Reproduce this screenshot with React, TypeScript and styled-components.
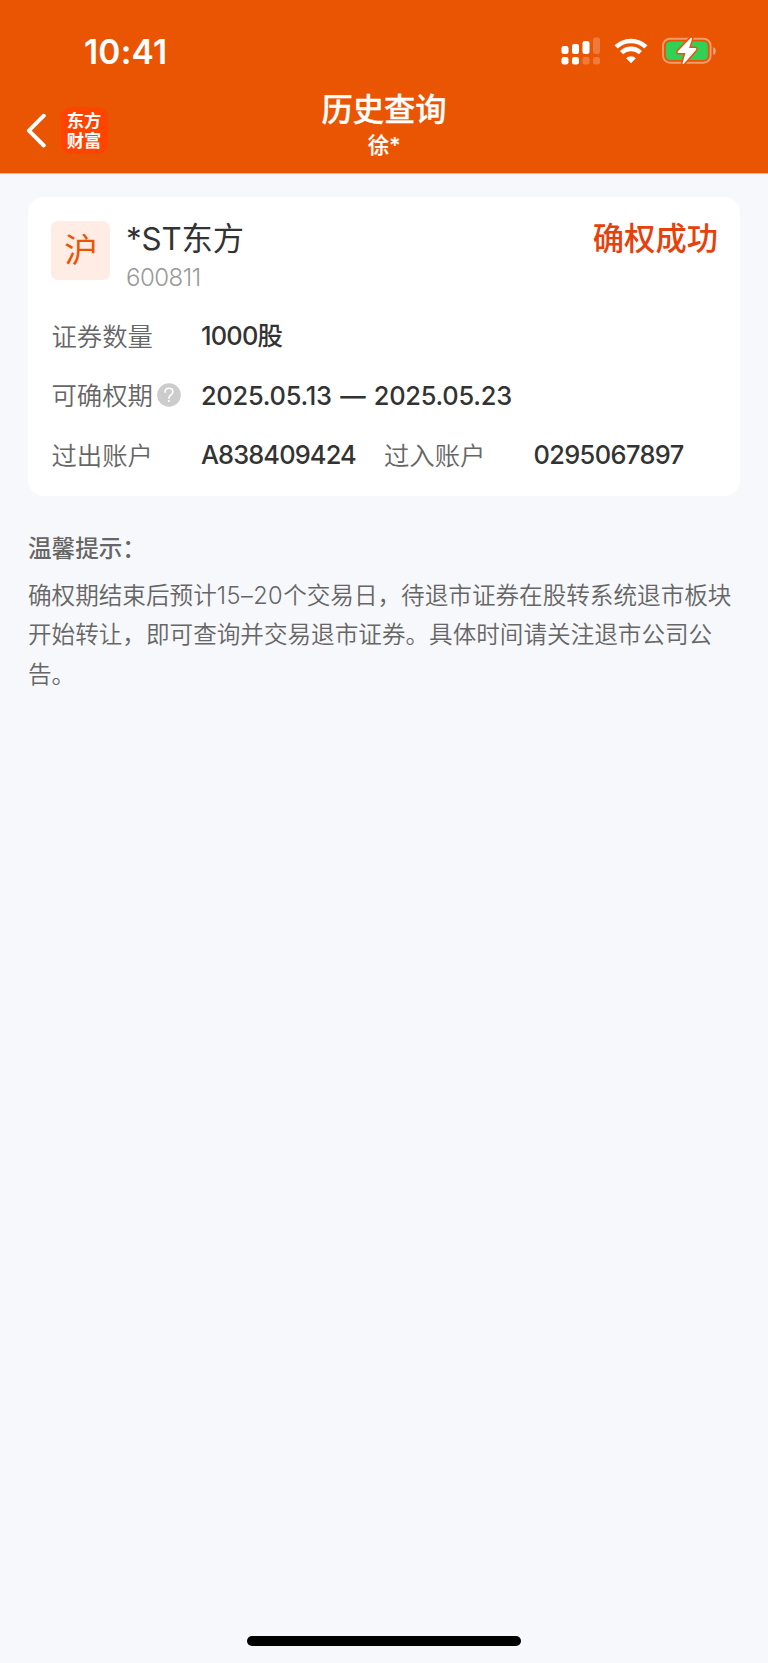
import React from "react";
import styled, { createGlobalStyle } from "styled-components";

const GlobalStyle = createGlobalStyle`
  * { box-sizing: border-box; }
  body {
    margin: 0;
    background: #f7f8fb;
    font-family: Inter, "Noto Sans CJK SC", sans-serif;
  }
`;

const Screen = styled.div`
  display: flex;
  flex-direction: column;
  width: 768px;
  height: 1663px;
  overflow: hidden;
  background: #f7f8fb;
`;

const Header = styled.header`
  flex: none;
  height: 174px;
  background: #ea5504;
  color: #fff;
  border-bottom: 1px solid #f2b294;
`;

const StatusBar = styled.div`
  display: flex;
  justify-content: space-between;
  align-items: center;
  height: 85px;
  padding: 17px 51px 0 84px;
`;

const Clock = styled.time`
  padding-top: 2px;
  font-size: 33.5px;
  font-weight: 600;
  line-height: 40px;
  letter-spacing: 0.2px;
`;

const StatusIcons = styled.div`
  display: flex;
  align-items: center;
  height: 40px;
`;

const NavBar = styled.div`
  display: grid;
  grid-template-columns: 1fr auto 1fr;
  height: 88px;
`;

const NavLeft = styled.div`
  display: flex;
  align-items: flex-start;
  gap: 15px;
  padding: 22px 0 0 26px;
`;

const BrandLogo = styled.div`
  display: flex;
  flex-direction: column;
  align-items: center;
  width: 47px;
  height: 47px;
  padding: 4px 1px 0 0;
  border-radius: 10px;
  background: #ff4300;
  font-size: 17.3px;
  font-weight: 700;
  line-height: 19.5px;
`;

const TitleGroup = styled.div`
  display: flex;
  flex-direction: column;
  align-items: center;
  padding-top: 5px;
`;

const Title = styled.h1`
  margin: 0;
  font-size: 31.3px;
  font-weight: 500;
  line-height: 40px;
  -webkit-text-stroke: 0.3px #fff;
`;

const Subtitle = styled.div`
  font-size: 21.5px;
  font-weight: 500;
  line-height: 31px;
  -webkit-text-stroke: 0.2px #fff;
`;

const Card = styled.section`
  flex: none;
  height: 299px;
  margin: 23px 28px 0;
  padding: 24px 22px 0 23.4px;
  border-radius: 16px;
  background: #fff;
`;

const StockHeader = styled.div`
  display: flex;
  align-items: flex-start;
  height: 82px;
`;

const MarketBadge = styled.div`
  width: 59px;
  height: 59px;
  margin-right: 15.6px;
  border-radius: 7px;
  background: #ffece5;
  color: #ea5504;
  font-size: 33.5px;
  line-height: 59px;
  text-align: center;
`;

const StockInfo = styled.div`
  display: flex;
  flex-direction: column;
  flex: 1;
`;

const StockName = styled.div`
  color: #333;
  font-size: 31.3px;
  line-height: 37px;
  letter-spacing: -0.15px;
`;

const StockCode = styled.div`
  color: #999;
  font-size: 24px;
  font-weight: 350;
  line-height: 40px;
  letter-spacing: -0.5px;
`;

const Status = styled.div`
  color: #e6400c;
  font-size: 31.3px;
  font-weight: 500;
  line-height: 37px;
`;

const Row = styled.div`
  display: flex;
  align-items: center;
  height: 59.6px;
`;

const Label = styled.div`
  display: flex;
  align-items: center;
  gap: 4.5px;
  width: 149.5px;
  padding-top: 4px;
  color: #666;
  font-family: "Noto Sans CJK SC", sans-serif;
  font-size: 25.4px;
  font-weight: 350;
  line-height: 36px;
`;

const Value = styled.div<{ $spacing?: number; $width?: number }>`
  width: ${(p) => (p.$width ? `${p.$width}px` : "auto")};
  padding-top: 7px;
  color: #333;
  font-size: 25.4px;
  font-weight: 500;
  line-height: 36px;
  white-space: pre;
  word-spacing: 1.9px;
  letter-spacing: ${(p) => p.$spacing ?? 0}px;
`;

const Tips = styled.section`
  flex: 1;
  padding: 35px 28px 0;
  color: #666;
`;

const TipsTitle = styled.h2`
  margin: 0 0 9px;
  font-size: 23.6px;
  font-weight: 500;
  line-height: 36px;
`;

const TipsText = styled.p`
  margin: 0;
  font-size: 23.6px;
  font-weight: 350;
  line-height: 39.4px;
  white-space: nowrap;
`;

const Digits = styled.span`
  letter-spacing: 0.45px;
`;

const HomeIndicator = styled.div`
  flex: none;
  align-self: center;
  width: 274px;
  height: 10px;
  margin-bottom: 17px;
  border-radius: 5px;
  background: #000;
`;

const SignalIcon = () => (
  <svg width="40" height="28" viewBox="0 0 40 28" fill="#fff">
    <rect x="0.5" y="9" width="7" height="8" rx="2.2" />
    <rect x="11" y="7" width="7" height="10" rx="2.2" />
    <rect x="21.5" y="4" width="7" height="13" rx="2.2" />
    <rect x="32" y="0.5" width="7" height="16.5" rx="2.2" opacity="0.22" />
    <rect x="0.5" y="20" width="7" height="7.6" rx="2.4" />
    <rect x="11" y="20" width="7" height="7.6" rx="2.4" />
    <rect x="21.5" y="20" width="7" height="7.6" rx="2.4" opacity="0.22" />
    <rect x="32" y="20" width="7" height="7.6" rx="2.4" opacity="0.22" />
  </svg>
);

const WifiIcon = styled.svg`
  margin: 0 14px 0 13px;
`;

const Wifi = () => (
  <WifiIcon width="34" height="26" viewBox="0 0 34 26">
    <g fill="none" stroke="#fff" strokeWidth="4.6">
      <path d="M2.1 8.9A21.6 21.6 0 0 1 31.9 8.9" />
      <path d="M7.6 14.6A13.6 13.6 0 0 1 26.4 14.6" />
    </g>
    <path d="M17 25.2 12.2 20.3A6.8 6.8 0 0 1 21.8 20.3Z" fill="#fff" />
  </WifiIcon>
);

const Battery = () => (
  <svg width="55" height="30" viewBox="0 0 55 30">
    <rect x="1" y="2.7" width="47.6" height="24" rx="7" fill="none" stroke="#fff" strokeOpacity="0.42" strokeWidth="1.9" />
    <rect x="3.8" y="5.5" width="42" height="18.6" rx="4.4" fill="#31d158" />
    <path d="M51.2 11Q53.9 12 53.9 15T51.2 19Z" fill="#fff" fillOpacity="0.45" />
    <path
      d="M28.6 1.9 15.7 15.6Q15.2 16.8 16.4 17H23.5L20.5 27.2Q20.7 28.5 21.9 27.7L34.2 13.7Q34.7 12.4 33.4 12.1H27.1L30 2.9Q29.8 1.5 28.6 1.9Z"
      fill="#fff"
      stroke="#ea5504"
      strokeWidth="3"
      paintOrder="stroke"
      strokeLinejoin="round"
    />
  </svg>
);

const BackIcon = () => (
  <svg width="20" height="47" viewBox="0 0 20 47" fill="none" stroke="#fff" strokeWidth="3.9" strokeLinecap="round" strokeLinejoin="round">
    <path d="M17.8 8.7 2.9 23.7 17.8 38.5" />
  </svg>
);

const HelpGlyph = styled.svg`
  margin-top: 2px;
`;

const HelpIcon = () => (
  <HelpGlyph width="24" height="24" viewBox="0 0 24 24" fill="none">
    <circle cx="12" cy="12" r="11.8" fill="#ccc" />
    <path d="M8 9.3C8 6.8 9.6 5.3 11.9 5.3S15.9 6.7 15.9 8.9C15.9 11.7 11.9 12 11.9 15.2" stroke="#fff" strokeWidth="1.6" strokeLinecap="round" />
    <circle cx="11.9" cy="18" r="1.1" fill="#fff" />
  </HelpGlyph>
);

export default function App() {
  return (
    <Screen>
      <GlobalStyle />
      <Header>
        <StatusBar>
          <Clock>10:41</Clock>
          <StatusIcons>
            <SignalIcon />
            <Wifi />
            <Battery />
          </StatusIcons>
        </StatusBar>
        <NavBar>
          <NavLeft>
            <BackIcon />
            <BrandLogo>
              <span>东方</span>
              <span>财富</span>
            </BrandLogo>
          </NavLeft>
          <TitleGroup>
            <Title>历史查询</Title>
            <Subtitle>徐*</Subtitle>
          </TitleGroup>
        </NavBar>
      </Header>
      <Card>
        <StockHeader>
          <MarketBadge>沪</MarketBadge>
          <StockInfo>
            <StockName>*ST东方</StockName>
            <StockCode>600811</StockCode>
          </StockInfo>
          <Status>确权成功</Status>
        </StockHeader>
        <Row>
          <Label>证券数量</Label>
          <Value $spacing={-0.75}>1000股</Value>
        </Row>
        <Row>
          <Label>
            可确权期
            <HelpIcon />
          </Label>
          <Value $spacing={-0.23}>2025.05.13 — 2025.05.23</Value>
        </Row>
        <Row>
          <Label>过出账户</Label>
          <Value $width={183} $spacing={-0.85}>A838409424</Value>
          <Label>过入账户</Label>
          <Value $spacing={-0.6}>0295067897</Value>
        </Row>
      </Card>
      <Tips>
        <TipsTitle>温馨提示：</TipsTitle>
        <TipsText>
          确权期结束后预计<Digits>15–20</Digits>个交易日，待退市证券在股转系统退市板块
          <br />
          开始转让，即可查询并交易退市证券。具体时间请关注退市公司公
          <br />
          告。
        </TipsText>
      </Tips>
      <HomeIndicator />
    </Screen>
  );
}
